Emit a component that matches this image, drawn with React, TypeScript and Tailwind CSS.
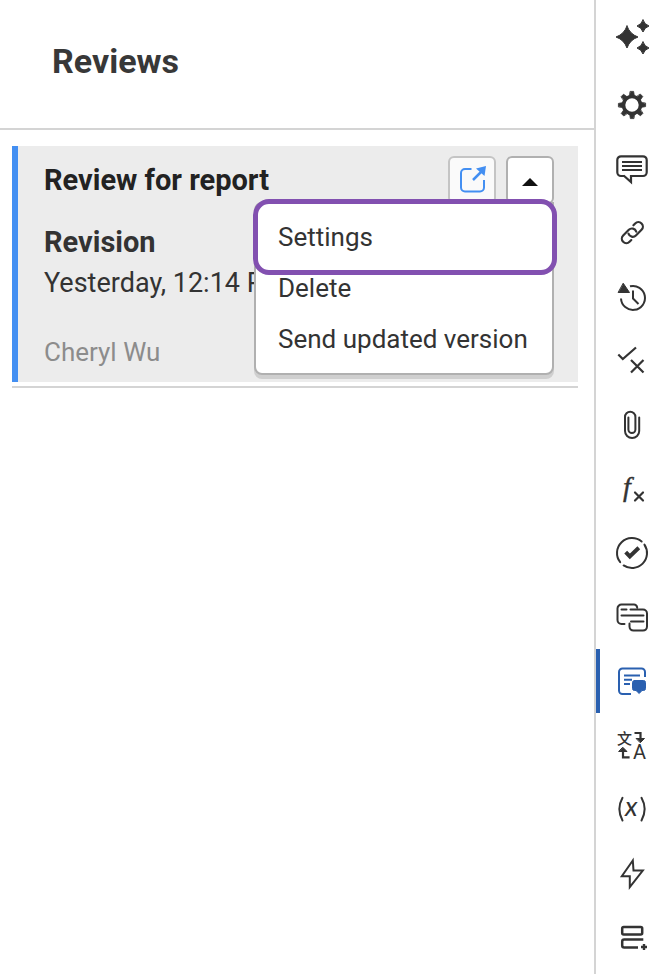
import type { ReactNode } from "react";

const SANS = "font-['Roboto','Liberation_Sans',sans-serif]";

function Glyph({ children }: { children: ReactNode }) {
  return (
    <svg
      width="40"
      height="40"
      viewBox="0 0 40 40"
      fill="none"
      stroke="currentColor"
      strokeWidth="2"
      strokeLinecap="round"
      strokeLinejoin="round"
      aria-hidden="true"
    >
      {children}
    </svg>
  );
}

const star = (cx: number, cy: number, r: number) => {
  const k = r * 0.26;
  return `M${cx} ${cy - r}Q${cx + k} ${cy - k} ${cx + r} ${cy}Q${cx + k} ${cy + k} ${cx} ${cy + r}Q${cx - k} ${cy + k} ${cx - r} ${cy}Q${cx - k} ${cy - k} ${cx} ${cy - r}Z`;
};

const tools: { name: string; icon: ReactNode; active?: boolean }[] = [
  {
    name: "Assistant",
    icon: (
      <g fill="currentColor" strokeWidth="1">
        <path d={star(15, 20, 11)} />
        <path d={star(31, 9, 6)} />
        <path d={star(31, 31, 6)} />
      </g>
    ),
  },
  {
    name: "Preferences",
    icon: (
      <>
        <circle cx="20" cy="20" r="8.5" strokeWidth="3.6" />
        {[0, 45, 90, 135, 180, 225, 270, 315].map((a) => (
          <path
            key={a}
            d="M18.400 6.400h3.200l0.800 4.600h-4.800z"
            fill="currentColor"
            strokeWidth="0.8"
            transform={`rotate(${a} 20 20)`}
          />
        ))}
      </>
    ),
  },
  {
    name: "Comments",
    icon: (
      <g strokeWidth="2.2" strokeLinecap="butt" strokeLinejoin="miter">
        <path d="M12 27H9a3.700 3.700 0 0 1-3.700-3.700V11A3.700 3.700 0 0 1 9 7.300h22a3.700 3.700 0 0 1 3.700 3.700v12.300a3.700 3.700 0 0 1-3.700 3.700H19V33l-7.400-6.500" />
        <path d="M10 13h20M10 17h20M10 21h20" strokeWidth="1.8" />
      </g>
    ),
  },
  {
    name: "Links",
    icon: (
      <g transform="rotate(-45 20 20)" strokeWidth="2.2">
        <path d="M14.500 24.500H12a4.500 4.500 0 0 1 0-9h8a4.500 4.500 0 0 1 4 6.500" />
        <path d="M26.500 15.500H29a4.500 4.500 0 0 1 0 9h-8a4.500 4.500 0 0 1-4-6.500" />
      </g>
    ),
  },
  {
    name: "History",
    icon: (
      <>
        <path d="M9 21.500a12 12 0 1 0 9-12.200" strokeLinecap="butt" />
        <path d="M11.400 6.500 17.500 15.500H6.500z" fill="currentColor" strokeWidth="1" />
        <path d="M21 13.500v8l5.500 5.500" strokeLinecap="butt" />
      </>
    ),
  },
  {
    name: "Accept or reject",
    icon: (
      <g strokeLinecap="butt" strokeLinejoin="miter" strokeWidth="2.2">
        <path d="M6.300 13.500 10.800 18 24 6.500" />
        <path d="M19 19l12.500 12.500M31.500 19 19 31.500" />
      </g>
    ),
  },
  {
    name: "Attachments",
    icon: (
      <path d="M27.200 12.500V26a7 7 0 0 1-14.200 0V12a5.200 5.200 0 0 1 10.400 0v12.500a3.500 3.500 0 0 1-7 0v-12" />
    ),
  },
  {
    name: "Formulas",
    icon: (
      <>
        <text
          x="11"
          y="27"
          fill="currentColor"
          stroke="currentColor"
          strokeWidth="0.4"
          className="font-['Liberation_Serif',serif] text-[28px] italic"
        >
          f
        </text>
        <path d="m23 23.500 8 8m0-8-8 8" strokeWidth="2.2" />
      </>
    ),
  },
  {
    name: "Approvals",
    icon: (
      <>
        <path d="M8.180 29.230A15 15 0 0 1 29.640 8.510M32.440 11.610A15 15 0 0 1 11.610 32.440" />
        <path
          d="m13.700 19.200 4.100 4.200 9-8.600"
          strokeWidth="4"
          strokeLinecap="butt"
          strokeLinejoin="miter"
        />
      </>
    ),
  },
  {
    name: "Threads",
    icon: (
      <path d="M12.500 27H9.500a4 4 0 0 1-4-4V11.500a4 4 0 0 1 4-4H22q2.500 0 3.200 3M18.500 12.600H31a4 4 0 0 1 4 4v13a4 4 0 0 1-4 4H21.500a4 4 0 0 1-4-4V26.500M9.500 12.600h5M9.500 18.600h22M19 24.400h12.500" />
    ),
  },
  {
    name: "Reviews",
    active: true,
    icon: (
      <>
        <path
          d="M19 33h-8.500a3.500 3.500 0 0 1-3.500-3.500v-18.500a3.500 3.500 0 0 1 3.500-3.500h19a3.500 3.500 0 0 1 3.500 3.500v5"
          strokeLinecap="butt"
        />
        <path d="M12 14.500h16M12 18.700h8M12 23h6" strokeLinecap="butt" />
        <path
          d="M22.500 19.500h9q2 0 2 2v6q0 2-2 2h-1.500L27.200 32.500 24 29.500h-1.500q-2 0-2-2v-6q0-2 2-2z"
          fill="currentColor"
          strokeWidth="1"
        />
      </>
    ),
  },
  {
    name: "Translate",
    icon: (
      <>
        <text
          x="5"
          y="19"
          fill="currentColor"
          stroke="none"
          className="font-['Noto_Sans_CJK_SC',sans-serif] text-[15px] font-medium"
        >
          文
        </text>
        <text
          x="21"
          y="34"
          fill="currentColor"
          stroke="none"
          className="font-['Roboto',sans-serif] text-[20px]"
        >
          A
        </text>
        <path d="M22.500 8h6v6M11 26v6.300h6.600" strokeWidth="2.200" strokeLinecap="butt" strokeLinejoin="miter" />
        <path d="M24.500 13.500h8l-4 4zM7 26.500h8l-4-4z" fill="currentColor" strokeWidth="1" />
      </>
    ),
  },
  {
    name: "Variables",
    icon: (
      <>
        <path d="M10.500 8.800Q4.200 20 10.500 31.500M29.500 8.800Q35.800 20 29.500 31.500" />
        <text
          x="13"
          y="27"
          fill="currentColor"
          stroke="none"
          className="font-['Lato',sans-serif] text-[27px] italic"
        >
          x
        </text>
      </>
    ),
  },
  {
    name: "Automations",
    icon: (
      <path
        d="M20.800 7.500 9.800 23.300h8V34L30.800 17.500h-9.300z"
        strokeLinejoin="miter"
      />
    ),
  },
  {
    name: "Add section",
    icon: (
      <>
        <rect x="10.200" y="10" width="20" height="7.500" rx="1.500" strokeWidth="2.500" />
        <path d="M31.300 22.500H12.200q-2 0-2 2v4q0 2 2 2H26" strokeWidth="2.500" strokeLinecap="butt" />
        <path d="M32 27v6M29 30h6" strokeWidth="2.400" strokeLinecap="butt" />
      </>
    ),
  },
];

function ToolRail() {
  return (
    <nav
      aria-label="Panels"
      className="flex w-16 shrink-0 flex-col border-l-2 border-[#d4d4d4] bg-white pt-[9px]"
    >
      {tools.map((tool, i) => (
        <button
          key={tool.name}
          type="button"
          aria-label={tool.name}
          aria-pressed={!!tool.active}
          className={`flex h-16 w-full shrink-0 items-center border-l-4 pl-3 ${
            tool.active ? "border-[#2a60b0] text-[#2a60b0]" : "border-transparent text-[#333333]"
          } ${i === 0 ? "pb-2" : ""}`}
        >
          <Glyph>{tool.icon}</Glyph>
        </button>
      ))}
    </nav>
  );
}

function ActionMenu() {
  return (
    <div
      role="menu"
      className="absolute top-[46px] right-0 w-[300px] rounded-lg rounded-tr-none border-2 border-[#b0b0b0] bg-white py-2 shadow-[0_4px_0_#cfcfcf]"
    >
      {["Settings", "Delete", "Send updated version"].map((label) => (
        <button
          key={label}
          type="button"
          role="menuitem"
          className="block h-[51px] w-full pl-[22px] text-left text-[26px] leading-[51px] whitespace-nowrap text-[#333333]"
        >
          {label}
        </button>
      ))}
      <div className="pointer-events-none absolute -top-[5px] -right-[5px] -left-[3px] h-[76px] rounded-2xl border-[5px] border-[#8250b0]" />
    </div>
  );
}

function ReviewCard() {
  return (
    <article className="flex items-start justify-between border-l-[6px] border-[#438ff2] bg-[#ececec] pr-6 pb-3 pl-[26px]">
      <div className="min-w-0 flex-1 whitespace-nowrap">
        <h2 className="pt-4 text-[29px] leading-9 font-bold text-[#222222]">Review for report</h2>
        <h3 className="pt-[26px] text-[29px] leading-9 font-bold text-[#333333]">Revision</h3>
        <p className="pt-[5px] text-[27px] leading-9 text-[#333333]">Yesterday, 12:14 PM</p>
        <p className="pt-[33px] text-[26px] leading-9 text-[#8c8c8c]">Cheryl Wu</p>
      </div>
      <div className="relative flex shrink-0 gap-[10px] pt-[10px]">
        <button
          type="button"
          aria-label="Open review"
          className="flex h-12 w-12 justify-center rounded-md border-2 border-[#c4c4c4] bg-[#fafafa] pt-[7px]"
        >
          <svg
            width="28"
            height="28"
            viewBox="0 0 28 28"
            fill="none"
            stroke="#438ff2"
            strokeWidth="2"
            aria-hidden="true"
          >
            <path d="M13.500 4H7a4 4 0 0 0-4 4v14.500a4 4 0 0 0 4 4h15a4 4 0 0 0 4-4V15" />
            <path d="M15 15 24 6" strokeWidth="2.500" />
            <path d="M28 1 26.500 11 18 3.500z" fill="#438ff2" stroke="none" />
          </svg>
        </button>
        <button
          type="button"
          aria-label="Review actions"
          aria-expanded="true"
          className="flex h-12 w-12 justify-center rounded-md border-2 border-[#b0b0b0] bg-white pt-5"
        >
          <svg width="16" height="8" viewBox="0 0 16 8" aria-hidden="true">
            <path d="M8 0 16 8H0z" fill="#111111" />
          </svg>
        </button>
        <div className="absolute inset-x-0 top-[10px]">
          <ActionMenu />
        </div>
      </div>
    </article>
  );
}

export default function App() {
  return (
    <div className={`flex min-h-screen overflow-hidden bg-white ${SANS}`}>
      <main className="min-w-0 flex-1">
        <header className="border-b-2 border-[#d4d4d4] px-[52px] pt-[41px] pb-[47px]">
          <h1 className="text-[34px] leading-10 font-bold text-[#383838]">Reviews</h1>
        </header>
        <section className="pt-4 pr-4 pl-3">
          <div className="border-b-2 border-[#d4d4d4] pb-1">
            <ReviewCard />
          </div>
        </section>
      </main>
      <ToolRail />
    </div>
  );
}
